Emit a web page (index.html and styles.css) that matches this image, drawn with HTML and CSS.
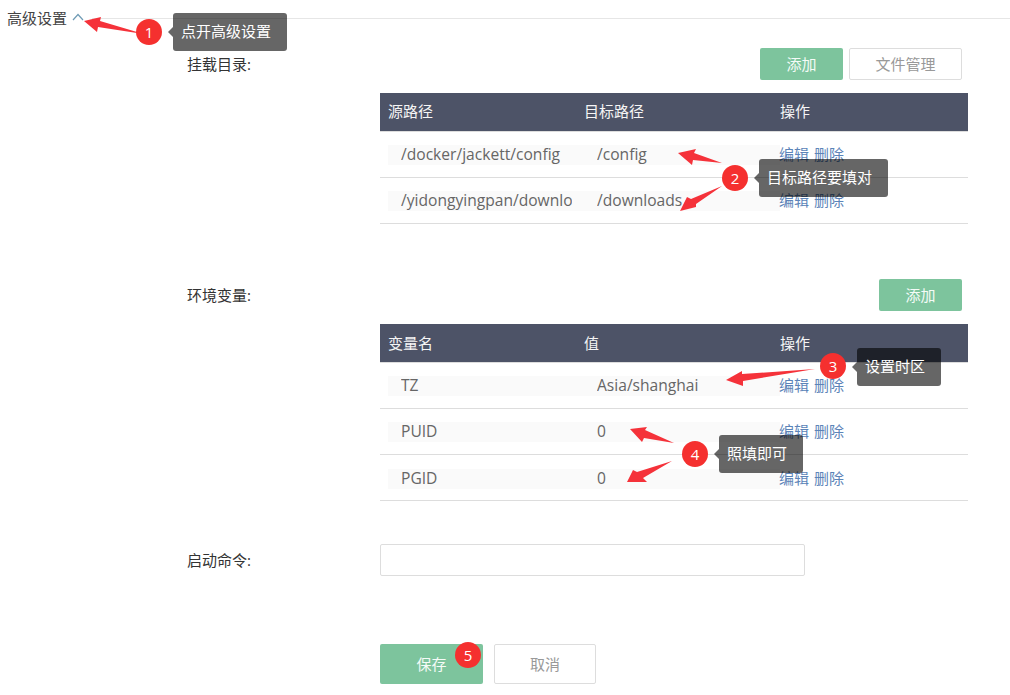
FILE: index.html
```html
<!DOCTYPE html>
<html lang="zh-CN">
<head>
<meta charset="utf-8">
<title>高级设置</title>
<link rel="stylesheet" href="styles.css">
</head>
<body>
<div class="page">
  <header class="heading">
    <span class="heading-text">高级设置</span>
    <svg class="chevron" width="12" height="8" viewBox="0 0 12 8"><path d="M1 7 L6 1.5 L11 7" fill="none" stroke="#6f9bb5" stroke-width="1.2"/></svg>
    <span class="heading-line"></span>
  </header>

  <section class="row row-mount">
    <div class="label">挂载目录:</div>
    <div class="content">
      <div class="toolbar">
        <button class="btn btn-green btn-add">添加</button>
        <button class="btn btn-plain btn-files">文件管理</button>
      </div>
      <div class="table">
        <div class="thead"><div>源路径</div><div>目标路径</div><div>操作</div></div>
        <div class="tr">
          <div class="td"><div class="field"><span>/docker/jackett/config</span></div></div>
          <div class="td"><div class="field"><span>/config</span></div></div>
          <div class="td actions"><a>编辑</a> <a>删除</a></div>
        </div>
        <div class="tr">
          <div class="td"><div class="field"><span>/yidongyingpan/downloads</span></div></div>
          <div class="td"><div class="field"><span>/downloads</span></div></div>
          <div class="td actions"><a>编辑</a> <a>删除</a></div>
        </div>
      </div>
    </div>
  </section>

  <section class="row row-env">
    <div class="label">环境变量:</div>
    <div class="content">
      <div class="toolbar">
        <button class="btn btn-green btn-add">添加</button>
      </div>
      <div class="table">
        <div class="thead"><div>变量名</div><div>值</div><div>操作</div></div>
        <div class="tr">
          <div class="td"><div class="field"><span>TZ</span></div></div>
          <div class="td"><div class="field"><span>Asia/shanghai</span></div></div>
          <div class="td actions"><a>编辑</a> <a>删除</a></div>
        </div>
        <div class="tr">
          <div class="td"><div class="field"><span>PUID</span></div></div>
          <div class="td"><div class="field"><span>0</span></div></div>
          <div class="td actions"><a>编辑</a> <a>删除</a></div>
        </div>
        <div class="tr">
          <div class="td"><div class="field"><span>PGID</span></div></div>
          <div class="td"><div class="field"><span>0</span></div></div>
          <div class="td actions"><a>编辑</a> <a>删除</a></div>
        </div>
      </div>
    </div>
  </section>

  <section class="row row-cmd">
    <div class="label">启动命令:</div>
    <div class="content"><div class="text-input"></div></div>
  </section>

  <section class="row row-submit">
    <div class="label"></div>
    <div class="content submit">
      <button class="btn btn-green btn-save">保存</button>
      <button class="btn btn-plain btn-cancel">取消</button>
    </div>
  </section>

  <svg class="arrows" width="1010" height="695" viewBox="0 0 1010 695">
    <g fill="#f5323a">
      <polygon points="84,21 101,17 100,21 137,32 137,33 98,27 97,32"/>
      <polygon points="678,153 696,149 694,153 722,163 693,160 692,165"/>
      <polygon points="680,211 687,197 691,199 722,186 696,204 696,207"/>
      <polygon points="726,380 742,371 742,374 815,369 743,381 743,386"/>
      <polygon points="630,429 647,427 645,430 674,443 644,438 642,442"/>
      <polygon points="627,482 633,470 637,472 672,461 643,478 647,482"/>
    </g>
  </svg>

  <div class="badge badge-1">1</div>
  <div class="badge badge-2">2</div>
  <div class="badge badge-3">3</div>
  <div class="badge badge-4">4</div>
  <div class="badge badge-5">5</div>

  <div class="tip tip-1">点开高级设置</div>
  <div class="tip tip-2">目标路径要填对</div>
  <div class="tip tip-3">设置时区</div>
  <div class="tip tip-4">照填即可</div>
</div>
</body>
</html>
```

FILE: styles.css
```css
* { box-sizing: border-box; }
html, body { margin: 0; padding: 0; background: #fff; }
body {
  font-family: "Open Sans", "Noto Sans CJK SC", sans-serif;
  font-size: 15px;
  color: #333;
}
.page {
  position: relative;
  width: 1010px;
  height: 695px;
  overflow: hidden;
}
.heading {
  display: flex;
  align-items: center;
  height: 37px;
  padding-left: 7px;
}
.heading-text { color: #444; line-height: 37px; }
.chevron { margin-left: 5px; margin-top: -4px; flex: none; }
.heading-line { flex: 1; height: 1px; margin-left: 8px; background: #e6e6e6; }

.row { display: flex; padding-left: 187px; }
.row-mount { margin-top: 11px; }
.row-env { margin-top: 55px; }
.row-cmd { margin-top: 43px; }
.row-submit { margin-top: 68px; }
.label { width: 193px; flex: none; line-height: 32px; color: #333; }
.content { width: 588px; flex: none; }

.toolbar { display: flex; justify-content: flex-end; gap: 6px; padding-right: 6px; }
.btn {
  font: inherit;
  border-radius: 2px;
  padding: 0 0 2px;
  cursor: pointer;
}
.btn-green { background: #7dc49d; border: 0; color: #f4fbf7; }
.btn-plain { background: #fff; border: 1px solid #ddd; color: #999; }
.btn-add { width: 83px; height: 32px; }
.btn-files { width: 113px; height: 32px; }

.table { margin-top: 13px; }
.thead {
  display: grid;
  grid-template-columns: repeat(3, 196px);
  height: 39px;
  background: #4d5367;
  border-bottom: 1px solid #ddd;
  color: #f5f5f5;
  line-height: 36px;
}
.row-env .thead { line-height: 38px; }
.thead > div { padding-left: 8px; }
.tr {
  display: grid;
  grid-template-columns: repeat(3, 196px);
  align-items: center;
  height: 46px;
  border-bottom: 1px solid #ddd;
}
.row-env .tr:last-child { padding-top: 2px; }
.td { padding-left: 8px; min-width: 0; }
.field {
  height: 20px;
  margin-right: -8px;
  background: #fafafa;
  padding: 0 12px 0 13px;
  color: #666;
  font-size: 15.6px;
}
.field span {
  display: block;
  height: 22px;
  line-height: 22px;
  overflow: hidden;
  white-space: nowrap;
  transform: translateY(-2px);
}
.actions { color: #5c84b8; margin-left: -1px; padding-bottom: 2px; word-spacing: 1px; }
.actions a { color: inherit; }

.text-input {
  width: 425px;
  height: 32px;
  border: 1px solid #ddd;
  border-radius: 2px;
  background: #fff;
}
.submit { display: flex; gap: 11px; }
.btn-save { width: 103px; height: 40px; }
.btn-cancel { width: 102px; height: 40px; }

/* annotation layer, placed over the form */
.arrows { position: absolute; left: 0; top: 0; pointer-events: none; }
.badge {
  position: absolute;
  width: 26px;
  height: 26px;
  border-radius: 50%;
  background: #f5302f;
  color: #fff;
  text-align: center;
  line-height: 26px;
  font-size: 15px;
}
.badge-1 { left: 136px; top: 19px; }
.badge-2 { left: 722px; top: 165px; }
.badge-3 { left: 820px; top: 353px; }
.badge-4 { left: 682px; top: 441px; }
.badge-5 { left: 455px; top: 642px; }

.tip {
  position: absolute;
  height: 38px;
  line-height: 37px;
  padding-left: 8px;
  background: rgba(0, 0, 0, .6);
  color: #fff;
  border-radius: 3px;
  white-space: nowrap;
}
.tip::before {
  content: "";
  position: absolute;
  left: -5px;
  top: 14px;
  border-style: solid;
  border-width: 5px 5px 5px 0;
  border-color: transparent rgba(0, 0, 0, .6) transparent transparent;
}
.tip-1 { left: 173px; top: 13px; width: 114px; }
.tip-2 { left: 759px; top: 159px; width: 129px; }
.tip-3 { left: 857px; top: 348px; width: 84px; }
.tip-4 { left: 719px; top: 435px; width: 84px; }
```
